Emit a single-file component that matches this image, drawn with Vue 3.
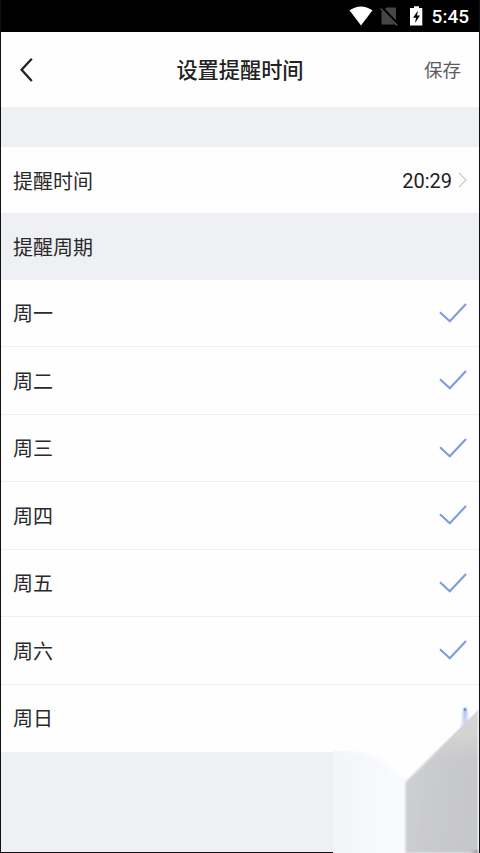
<script setup>
const days = ['周一', '周二', '周三', '周四', '周五', '周六', '周日']
</script>

<template>
  <div class="screen">
    <header class="status">
      <svg class="status-icons" width="78" height="32" viewBox="0 0 78 32">
        <path d="M0.5 10.3Q12 2.5 23.5 10.3L12 25.5Z" fill="#fff" />
        <path d="M37.5 7.5H47V24.5H32.5V12.5Z" fill="#464646" />
        <path d="M32.8 8L49 25" stroke="#000" stroke-width="3.4" />
        <path d="M31.5 8.5L48.3 25.5" stroke="#555" stroke-width="1.4" />
        <path d="M65 6.3H70V8H73.3V25.5H61V8H65Z" fill="#fff" />
        <path d="M69 10.5L64 17.8H67L66 23L71 15.6H68Z" fill="#000" />
      </svg>
      <span class="clock">5:45</span>
    </header>

    <nav class="bar">
      <svg class="back" width="14" height="26" viewBox="0 0 14 26">
        <path d="M12.8 1.7L2.6 12.8L12.8 24" fill="none" stroke="#222" stroke-width="2.3" />
      </svg>
      <h1 class="title">设置提醒时间</h1>
      <span class="save">保存</span>
    </nav>

    <div class="gap"></div>

    <div class="time-row">
      <span class="label">提醒时间</span>
      <span class="time">20:29</span>
      <svg class="chevron" width="9" height="16" viewBox="0 0 9 16">
        <path d="M1 1L8 8L1 15" fill="none" stroke="#ccc" stroke-width="1.3" />
      </svg>
    </div>

    <div class="section"><span class="label">提醒周期</span></div>

    <ul class="days">
      <li v-for="(day, i) in days" :key="day" class="day">
        <span class="label">{{ day }}</span>
        <svg v-if="i < days.length - 1" class="check" width="28" height="20" viewBox="0 0 28 20">
          <path d="M1 9.3L10.8 18.3L27 1" fill="none" stroke="#7e9bdb" stroke-width="2.1" />
        </svg>
      </li>
    </ul>

    <div class="bottom-edge"></div>

    <svg class="corner" width="159" height="163" viewBox="0 0 159 163">
      <defs>
        <linearGradient id="haze" x1="0" y1="0" x2="1" y2="0">
          <stop offset="0" stop-color="#f3f4f8" />
          <stop offset="0.25" stop-color="#f7f8fc" />
          <stop offset="0.5" stop-color="#fafbff" />
          <stop offset="1" stop-color="#fbfcff" />
        </linearGradient>
        <linearGradient id="fold" x1="0" y1="0" x2="1" y2="0.25">
          <stop offset="0" stop-color="#cfd0d3" />
          <stop offset="0.55" stop-color="#c9cacd" />
          <stop offset="1" stop-color="#c6c7ca" />
        </linearGradient>
        <linearGradient id="foldTop" x1="0" y1="0" x2="0" y2="1">
          <stop offset="0" stop-color="#d5d5d5" />
          <stop offset="0.45" stop-color="#d3d3d3" />
          <stop offset="1" stop-color="#d0d0d2" stop-opacity="0" />
        </linearGradient>
        <linearGradient id="tick" x1="0" y1="0" x2="0" y2="1">
          <stop offset="0" stop-color="#8fabe8" />
          <stop offset="0.35" stop-color="#b9cdf6" />
          <stop offset="1" stop-color="#e2ebff" />
        </linearGradient>
        <filter id="soft" x="-50%" y="-20%" width="200%" height="140%">
          <feGaussianBlur stdDeviation="0.8" />
        </filter>
        <filter id="edge" x="-20%" y="-20%" width="140%" height="140%">
          <feGaussianBlur stdDeviation="2" />
        </filter>
      </defs>
      <rect x="13" y="61" width="146" height="102" fill="url(#haze)" />
      <path d="M10 55L28 61C47 61 58 66 66 75C73 82 79 84 86 90H110V50Z" fill="#fefefe" filter="url(#edge)" />
      <path d="M143.5 18H146.5L149 38L141 40Z" fill="url(#tick)" filter="url(#soft)" />
      <circle cx="145" cy="19.5" r="1.2" fill="#6680c4" />
      <path d="M85.5 92L159 20V163H85.5Z" fill="url(#fold)" filter="url(#soft)" />
      <path d="M104 74L158 21V74Z" fill="url(#foldTop)" />
      <path d="M158.3 22V162" stroke="#f2f2f2" stroke-width="1.3" />
      <path d="M150 163L158 160V163Z" fill="#8e8e90" filter="url(#soft)" />
    </svg>
  </div>
</template>

<style>
body {
  margin: 0;
  background: #000;
}
</style>

<style scoped>
.screen {
  position: relative;
  box-sizing: border-box;
  width: 480px;
  height: 853px;
  overflow: hidden;
  border: solid #111114;
  border-width: 0 1px;
  background: #eff0f4;
  color: #2a2a2c;
  font: 20px/30px Roboto, "Noto Sans CJK SC", sans-serif;
}
.status {
  display: flex;
  align-items: center;
  justify-content: flex-end;
  height: 32px;
  padding-right: 10px;
  background: #000;
}
.status-icons {
  margin-right: 5px;
}
.clock {
  padding-top: 1px;
  color: #fff;
  font-size: 19px;
  font-weight: 500;
}
.bar {
  display: grid;
  grid-template-columns: 1fr auto 1fr;
  align-items: center;
  box-sizing: border-box;
  height: 75px;
  padding: 0 18px;
  background: #fefefe;
}
.title {
  margin: 0;
  padding-top: 2px;
  color: #222;
  font-size: 21.2px;
  font-weight: 500;
}
.save {
  justify-self: end;
  padding-top: 2px;
  color: #5c5c5f;
  font-size: 18.5px;
}
.gap {
  height: 40px;
}
.time-row {
  display: flex;
  align-items: center;
  height: 66px;
  padding: 0 12px;
  background: #fefefe;
}
.label {
  padding-top: 3px;
}
.time {
  margin-left: auto;
  margin-right: 6px;
  padding-top: 1px;
  color: #222;
}
.section {
  display: flex;
  align-items: center;
  height: 66.5px;
  padding: 0 12px;
}
.days {
  margin: 0;
  padding: 0;
  list-style: none;
}
.day {
  display: flex;
  align-items: center;
  justify-content: space-between;
  box-sizing: border-box;
  height: 67.5px;
  padding: 0 12px;
  border-bottom: 1px solid #f0f0f1;
  background: #fefefe;
}
.day:last-child {
  border-bottom-color: #fefefe;
}
.bottom-edge {
  position: absolute;
  bottom: 0;
  left: 0;
  width: 332px;
  height: 1px;
  background: #111114;
}
.corner {
  position: absolute;
  right: 0;
  bottom: 0;
}
</style>
